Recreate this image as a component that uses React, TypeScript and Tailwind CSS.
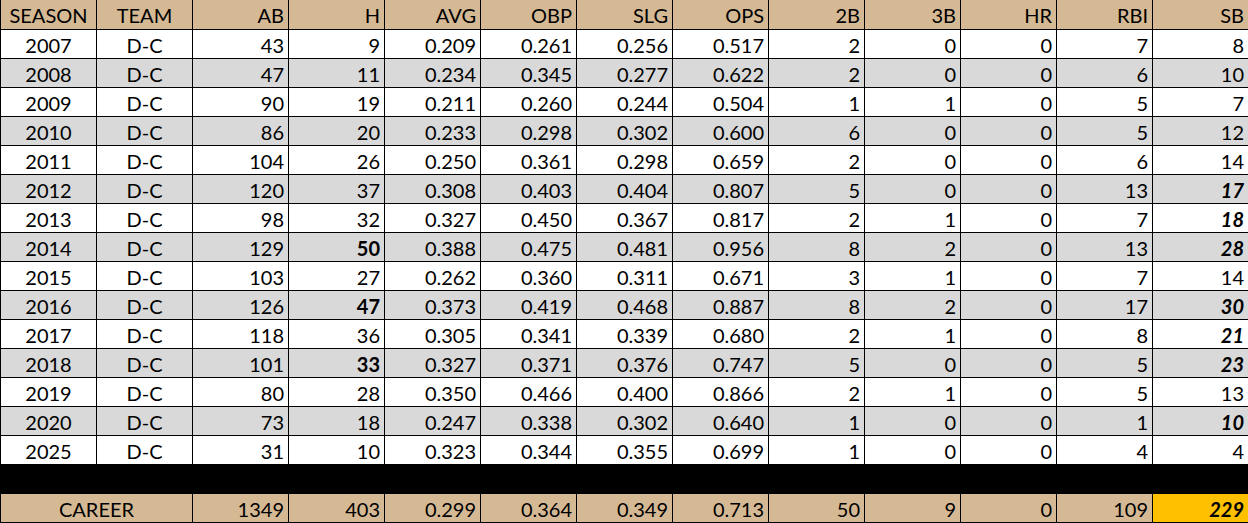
type Row = (string | number)[];

const headers = ['SEASON', 'TEAM', 'AB', 'H', 'AVG', 'OBP', 'SLG', 'OPS', '2B', '3B', 'HR', 'RBI', 'SB'];

const rows: Row[] = [
  [2007, 'D-C', 43, 9, '0.209', '0.261', '0.256', '0.517', 2, 0, 0, 7, 8],
  [2008, 'D-C', 47, 11, '0.234', '0.345', '0.277', '0.622', 2, 0, 0, 6, 10],
  [2009, 'D-C', 90, 19, '0.211', '0.260', '0.244', '0.504', 1, 1, 0, 5, 7],
  [2010, 'D-C', 86, 20, '0.233', '0.298', '0.302', '0.600', 6, 0, 0, 5, 12],
  [2011, 'D-C', 104, 26, '0.250', '0.361', '0.298', '0.659', 2, 0, 0, 6, 14],
  [2012, 'D-C', 120, 37, '0.308', '0.403', '0.404', '0.807', 5, 0, 0, 13, 17],
  [2013, 'D-C', 98, 32, '0.327', '0.450', '0.367', '0.817', 2, 1, 0, 7, 18],
  [2014, 'D-C', 129, 50, '0.388', '0.475', '0.481', '0.956', 8, 2, 0, 13, 28],
  [2015, 'D-C', 103, 27, '0.262', '0.360', '0.311', '0.671', 3, 1, 0, 7, 14],
  [2016, 'D-C', 126, 47, '0.373', '0.419', '0.468', '0.887', 8, 2, 0, 17, 30],
  [2017, 'D-C', 118, 36, '0.305', '0.341', '0.339', '0.680', 2, 1, 0, 8, 21],
  [2018, 'D-C', 101, 33, '0.327', '0.371', '0.376', '0.747', 5, 0, 0, 5, 23],
  [2019, 'D-C', 80, 28, '0.350', '0.466', '0.400', '0.866', 2, 1, 0, 5, 13],
  [2020, 'D-C', 73, 18, '0.247', '0.338', '0.302', '0.640', 1, 0, 0, 1, 10],
  [2025, 'D-C', 31, 10, '0.323', '0.344', '0.355', '0.699', 1, 0, 0, 4, 4],
];

// league-leading marks from the sheet
const boldH = new Set([2014, 2016, 2018]);
const italicSB = new Set([2012, 2013, 2014, 2016, 2017, 2018, 2020]);

const career = [1349, 403, '0.299', '0.364', '0.349', '0.713', 50, 9, 0, 109];

export default function App() {
  return (
    <div className="w-[1248px] h-[523px] bg-white overflow-hidden" style={{ fontFamily: 'Lato, "Open Sans", sans-serif' }}>
      <table className="border-collapse table-fixed w-[1248px] text-[20px] text-black leading-none">
        <colgroup>
          {headers.map((h) => (
            <col key={h} className="w-[96px]" />
          ))}
        </colgroup>
        <thead>
          <tr className="bg-[#d5b994] h-[29px]">
            {headers.map((h, i) => (
              <th
                key={h}
                className={`font-normal border-x border-b border-black px-1 pt-0.5 ${i < 2 ? 'text-center' : 'text-right'}`}
              >
                {h}
              </th>
            ))}
          </tr>
        </thead>
        <tbody>
          {rows.map((r, ri) => {
            const year = r[0] as number;
            return (
              <tr key={year} className={`h-[29px] ${ri % 2 === 1 ? 'bg-[#d9d9d9]' : 'bg-white'}`}>
                {r.map((v, ci) => {
                  let extra = '';
                  if (ci === 3 && boldH.has(year)) extra = 'font-bold';
                  if (ci === 12 && italicSB.has(year)) extra = 'font-bold italic';
                  return (
                    <td
                      key={ci}
                      className={`border border-black px-1 pt-0.5 ${ci < 2 ? 'text-center' : 'text-right'} ${extra}`}
                    >
                      {v}
                    </td>
                  );
                })}
              </tr>
            );
          })}
          <tr className="h-[29px] bg-black">
            <td colSpan={13} className="border border-black" />
          </tr>
          <tr className="h-[29px] bg-[#d5b994]">
            <td colSpan={2} className="border border-black text-center pt-0.5">
              CAREER
            </td>
            {career.map((v, i) => (
              <td key={i} className="border border-black px-1 pt-0.5 text-right">
                {v}
              </td>
            ))}
            <td className="border border-black px-1 pt-0.5 text-right bg-[#ffc000] font-bold italic">229</td>
          </tr>
        </tbody>
      </table>
    </div>
  );
}
